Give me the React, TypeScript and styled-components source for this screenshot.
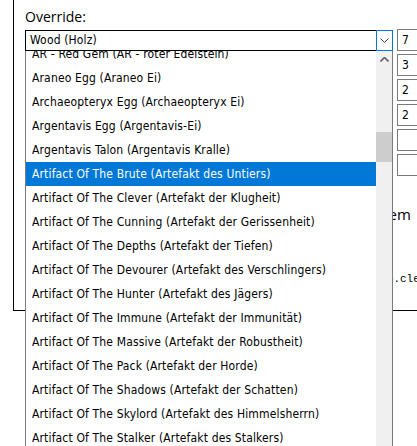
import React from 'react';
import styled, { createGlobalStyle } from 'styled-components';

// Grundstile der Seite: kein Rand, weißer Hintergrund
const GlobalStyle = createGlobalStyle`
  html, body {
    margin: 0;
    padding: 0;
    background: #fff;
  }
  body {
    width: 417px;
    height: 446px;
    overflow: hidden;
  }
`;

const uiFont = `"DejaVu Sans Condensed", "DejaVu Sans", sans-serif`;

const Page = styled.div`
  width: 417px;
  height: 446px;
  overflow: hidden;
  box-sizing: border-box;
  padding-left: 13px;
  background: #fff;
`;

// Gruppe mit schwarzer Linie links und unten
const Panel = styled.section`
  width: 520px;
  height: 311px;
  box-sizing: border-box;
  border-left: 1px solid #000;
  border-bottom: 1px solid #000;
  padding: 7px 0 0 11px;
`;

const Caption = styled.div`
  font-family: "Open Sans", "Noto Sans", sans-serif;
  font-size: 14px;
  line-height: 20px;
  color: #000;
  margin-bottom: 3px;
`;

const EditorRow = styled.div`
  display: flex;
  align-items: flex-start;
  gap: 4px;
`;

const ComboWrap = styled.div`
  position: relative;
  flex: none;
  width: 368px;
`;

const ComboBox = styled.div`
  display: flex;
  height: 21px;
`;

const ComboText = styled.div`
  flex: 1;
  box-sizing: border-box;
  border: 1px solid #000;
  border-right: none;
  padding-left: 4px;
  font-family: ${uiFont};
  font-size: 12px;
  letter-spacing: 0.15px;
  line-height: 19px;
  color: #000;
`;

const ComboButton = styled.div`
  width: 17px;
  box-sizing: border-box;
  border: 1px solid #0078d7;
  background: #fff;
  display: flex;
  align-items: center;
  justify-content: center;
`;

// Aufgeklappte Liste liegt über dem Rest des Panels
const Dropdown = styled.div`
  position: absolute;
  top: 21px;
  left: 0;
  width: 368px;
  height: 400px;
  box-sizing: border-box;
  border-left: 1px solid #7a7a7a;
  border-right: 1px solid #7a7a7a;
  background: #fff;
  display: flex;
  z-index: 2;
`;

const ListViewport = styled.div`
  flex: 1;
  overflow: hidden;
`;

const ListInner = styled.div`
  margin-top: -9px;
`;

const Option = styled.div<{ $selected?: boolean }>`
  height: 24px;
  display: flex;
  align-items: center;
  padding-left: 6px;
  white-space: nowrap;
  font-family: ${uiFont};
  font-size: 12px;
  letter-spacing: 0.15px;
  color: ${(p) => (p.$selected ? '#fff' : '#000')};
  background: ${(p) => (p.$selected ? '#0078d7' : 'transparent')};
`;

const Scrollbar = styled.div`
  width: 16px;
  flex: none;
  background: #f0f0f0;
  display: flex;
  flex-direction: column;
`;

const ScrollArrow = styled.div`
  height: 17px;
  display: flex;
  align-items: center;
  justify-content: center;
`;

const ScrollThumb = styled.div<{ $offset: number }>`
  margin-top: ${(p) => p.$offset}px;
  height: 30px;
  background: #cdcdcd;
`;

const FieldColumn = styled.div`
  display: flex;
  flex-direction: column;
  gap: 3px;
  margin-top: -1px;
`;

const Field = styled.div`
  width: 60px;
  height: 22px;
  box-sizing: border-box;
  border: 1px solid #7a7a7a;
  padding-left: 4px;
  font-family: ${uiFont};
  font-size: 12px;
  line-height: 20px;
  color: #000;
`;

// Bereich unter der Auswahl (wird von der Liste großteils verdeckt)
const Details = styled.div`
  display: flex;
  flex-direction: column;
  align-items: flex-start;
  margin-top: 27px;
`;

const DetailTitle = styled.div`
  margin-left: 354px;
  font-family: "Open Sans", "Noto Sans", sans-serif;
  font-size: 15px;
  line-height: 22px;
  color: #000;
`;

const DetailCode = styled.div`
  margin: 47px 0 0 342px;
  font-family: "Liberation Mono", monospace;
  font-size: 11px;
  line-height: 14px;
  color: #000;
  white-space: nowrap;
`;

const items = [
  'AR - Red Gem (AR - roter Edelstein)',
  'Araneo Egg (Araneo Ei)',
  'Archaeopteryx Egg (Archaeopteryx Ei)',
  'Argentavis Egg (Argentavis-Ei)',
  'Argentavis Talon (Argentavis Kralle)',
  'Artifact Of The Brute (Artefakt des Untiers)',
  'Artifact Of The Clever (Artefakt der Klugheit)',
  'Artifact Of The Cunning (Artefakt der Gerissenheit)',
  'Artifact Of The Depths (Artefakt der Tiefen)',
  'Artifact Of The Devourer (Artefakt des Verschlingers)',
  'Artifact Of The Hunter (Artefakt des Jägers)',
  'Artifact Of The Immune (Artefakt der Immunität)',
  'Artifact Of The Massive (Artefakt der Robustheit)',
  'Artifact Of The Pack (Artefakt der Horde)',
  'Artifact Of The Shadows (Artefakt der Schatten)',
  'Artifact Of The Skylord (Artefakt des Himmelsherrn)',
  'Artifact Of The Stalker (Artefakt des Stalkers)',
  'Artifact Of The Strong (Artefakt der Stärke)',
];

const selectedIndex = 5;
const fieldValues = ['7', '3', '2', '2', '', ''];

const Chevron: React.FC<{ up?: boolean }> = ({ up }) => (
  <svg width="9" height="5" viewBox="0 0 9 5" fill="none">
    <path
      d={up ? 'M0.5 4.5 L4.5 0.5 L8.5 4.5' : 'M0.5 0.5 L4.5 4.5 L8.5 0.5'}
      stroke={up ? '#606060' : '#404040'}
      strokeWidth={up ? 1.6 : 1}
    />
  </svg>
);

const App: React.FC = () => {
  const thumbOffset = Math.round(selectedIndex * 12.8);

  return (
    <Page>
      <GlobalStyle />
      <Panel>
        <Caption>Override:</Caption>
        <EditorRow>
          <ComboWrap>
            <ComboBox>
              <ComboText>Wood (Holz)</ComboText>
              <ComboButton>
                <Chevron />
              </ComboButton>
            </ComboBox>
            <Dropdown>
              <ListViewport>
                <ListInner>
                  {items.map((item, i) => (
                    <Option key={item} $selected={i === selectedIndex}>
                      {item}
                    </Option>
                  ))}
                </ListInner>
              </ListViewport>
              <Scrollbar>
                <ScrollArrow>
                  <Chevron up />
                </ScrollArrow>
                <ScrollThumb $offset={thumbOffset} />
              </Scrollbar>
            </Dropdown>
          </ComboWrap>
          <FieldColumn>
            {fieldValues.map((v, i) => (
              <Field key={i}>{v}</Field>
            ))}
          </FieldColumn>
        </EditorRow>
        <Details>
          <DetailTitle>Item</DetailTitle>
          <DetailCode>Item.cleanup</DetailCode>
        </Details>
      </Panel>
    </Page>
  );
};

export default App;
